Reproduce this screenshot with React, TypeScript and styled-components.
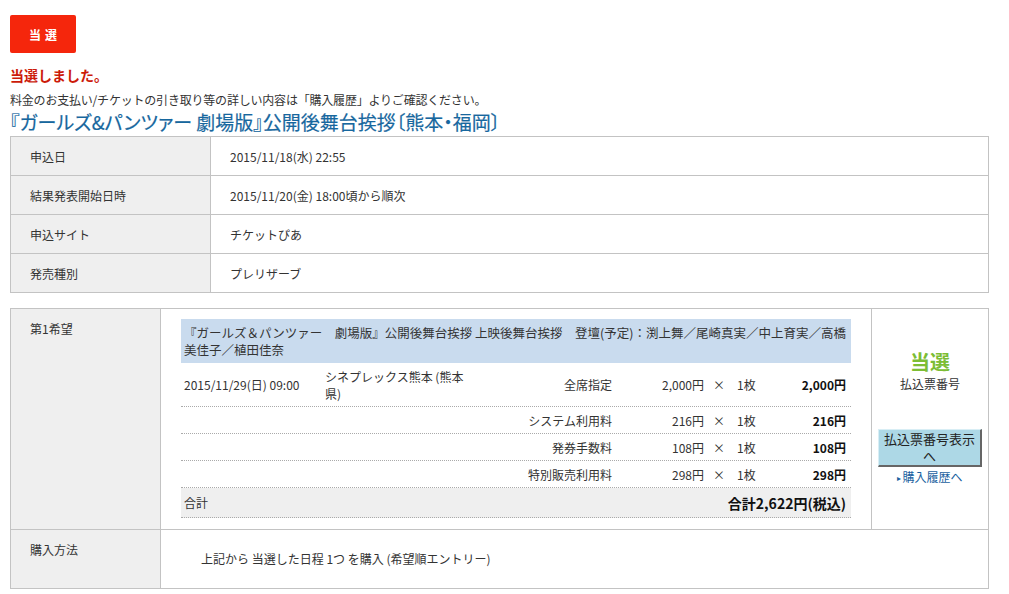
import React from 'react';
import styled, { createGlobalStyle } from 'styled-components';

const GlobalStyle = createGlobalStyle`
  body {
    margin: 0;
    background: #fff;
    font-family: "Noto Sans CJK JP", "Noto Sans", sans-serif;
    font-size: 12px;
    color: #333;
  }
`;

const Page = styled.div`
  width: 979px;
  padding: 15px 20px 10px 10px;
`;

const Badge = styled.div`
  width: 66px;
  height: 38px;
  background: #f5260c;
  border-radius: 2px;
  color: #fff;
  font-weight: bold;
  font-size: 12px;
  letter-spacing: 4px;
  display: flex;
  align-items: center;
  justify-content: center;
  padding-left: 4px;
  box-sizing: border-box;
`;

const Result = styled.div`
  margin-top: 12px;
  color: #cc1a0a;
  font-weight: bold;
  font-size: 14px;
  line-height: 20px;
`;

const Note = styled.div`
  margin-top: 6px;
  line-height: 18px;
  letter-spacing: -0.2px;
`;

const Title = styled.h1`
  margin: 2px 0 3px;
  font-size: 19px;
  line-height: 22px;
  font-weight: normal;
  color: #17679e;
  -webkit-text-stroke: 0.2px #17679e;
  font-feature-settings: "palt";
`;

const InfoTable = styled.div`
  border: 1px solid #c3c3c3;
  border-bottom: none;
`;

const InfoRow = styled.div`
  display: grid;
  grid-template-columns: 200px 1fr;
  height: 39px;
  border-bottom: 1px solid #c3c3c3;
  box-sizing: border-box;
`;

const Label = styled.div<{ $top?: boolean }>`
  background: #efefef;
  border-right: 1px solid #c3c3c3;
  padding: ${(p) => (p.$top ? '11px 19px' : '0 19px')};
  display: flex;
  align-items: ${(p) => (p.$top ? 'flex-start' : 'center')};
`;

const Value = styled.div`
  padding: 0 19px;
  display: flex;
  align-items: center;
`;

const EntryTable = styled.div`
  margin-top: 15px;
  border: 1px solid #c3c3c3;
  border-bottom: none;
`;

const EntryRow = styled.div<{ $cols: string }>`
  display: grid;
  grid-template-columns: ${(p) => p.$cols};
  border-bottom: 1px solid #c3c3c3;
`;

const Detail = styled.div`
  border-right: 1px solid #c3c3c3;
  padding: 10px 20px 11px 20px;
`;

const Method = styled.div`
  display: flex;
  align-items: center;
  padding: 0 0 2px 40px;
  height: 58px;
  box-sizing: border-box;
`;

const Header = styled.div`
  background: #c9dbee;
  padding: 5px 3px;
  height: 44px;
  box-sizing: border-box;
  font-size: 12.5px;
  line-height: 17px;
  color: #333;
`;

const PriceRow = styled.div<{ $h: number }>`
  display: grid;
  grid-template-columns: 143px 152px 136px 92px 30px 40px 1fr;
  height: ${(p) => p.$h}px;
  border-bottom: 1px dotted #aaa;
  box-sizing: border-box;
  align-items: center;
`;

const Cell = styled.div<{ $align?: 'left' | 'right' | 'center'; $bold?: boolean }>`
  text-align: ${(p) => p.$align || 'left'};
  font-weight: ${(p) => (p.$bold ? 'bold' : 'normal')};
  line-height: 17px;
  color: ${(p) => (p.$bold ? '#111' : '#333')};
`;

const TotalRow = styled.div`
  display: flex;
  justify-content: space-between;
  align-items: center;
  height: 30px;
  background: #efefef;
  border-bottom: 1px dotted #aaa;
  padding: 0 5px 0 3px;
  box-sizing: border-box;
`;

const GrandTotal = styled.span`
  font-weight: bold;
  font-size: 14px;
  color: #111;
`;

const Status = styled.div`
  display: flex;
  flex-direction: column;
  align-items: center;
  justify-content: center;
  padding-bottom: 2px;
`;

const Won = styled.div`
  color: #7cbd34;
  font-weight: bold;
  font-size: 20px;
  line-height: 26px;
  margin-top: -2px;
`;

const Caption = styled.div`
  line-height: 17px;
  margin-bottom: 37px;
`;

const ShowButton = styled.button`
  width: 104px;
  height: 38px;
  background: #add8e6;
  border-style: solid;
  border-width: 1px 2px 2px 1px;
  border-color: #d8eef5 #666 #666 #d8eef5;
  font-family: inherit;
  font-size: 13px;
  line-height: 17px;
  color: #222;
  padding: 0;
`;

const HistoryLink = styled.a`
  color: #1a5fa0;
  text-decoration: none;
  line-height: 17px;
  margin-top: 1px;
  &::before {
    content: '▸';
    font-size: 8px;
    margin-right: 1px;
    vertical-align: 1px;
  }
`;

const info: [string, string][] = [
  ['申込日', '2015/11/18(水) 22:55'],
  ['結果発表開始日時', '2015/11/20(金) 18:00頃から順次'],
  ['申込サイト', 'チケットぴあ'],
  ['発売種別', 'プレリザーブ'],
];

const fees: [string, string, string][] = [
  ['システム利用料', '216円', '216円'],
  ['発券手数料', '108円', '108円'],
  ['特別販売利用料', '298円', '298円'],
];

export default function App() {
  return (
    <>
      <GlobalStyle />
      <Page>
        <Badge>当選</Badge>
        <Result>当選しました。</Result>
        <Note>料金のお支払い/チケットの引き取り等の詳しい内容は「購入履歴」よりご確認ください。</Note>
        <Title>『ガールズ&パンツァー 劇場版』公開後舞台挨拶〔熊本・福岡〕</Title>

        <InfoTable>
          {info.map(([k, v]) => (
            <InfoRow key={k}>
              <Label>{k}</Label>
              <Value>{v}</Value>
            </InfoRow>
          ))}
        </InfoTable>

        <EntryTable>
          <EntryRow $cols="150px 1fr 116px">
            <Label $top>第1希望</Label>
            <Detail>
              <Header>
                『ガールズ＆パンツァー　劇場版』公開後舞台挨拶 上映後舞台挨拶　登壇(予定)：渕上舞／尾崎真実／中上育実／高橋美佳子／植田佳奈
              </Header>
              <PriceRow $h={44}>
                <Cell style={{ paddingLeft: 3 }}>2015/11/29(日) 09:00</Cell>
                <Cell style={{ paddingLeft: 1, paddingRight: 5 }}>シネプレックス熊本 (熊本県)</Cell>
                <Cell $align="right">全席指定</Cell>
                <Cell $align="right">2,000円</Cell>
                <Cell $align="center">×</Cell>
                <Cell style={{ paddingLeft: 3 }}>1枚</Cell>
                <Cell $align="right" $bold style={{ paddingRight: 5 }}>2,000円</Cell>
              </PriceRow>
              {fees.map(([name, unit, sum]) => (
                <PriceRow $h={27} key={name}>
                  <Cell />
                  <Cell />
                  <Cell $align="right">{name}</Cell>
                  <Cell $align="right">{unit}</Cell>
                  <Cell $align="center">×</Cell>
                  <Cell style={{ paddingLeft: 3 }}>1枚</Cell>
                  <Cell $align="right" $bold style={{ paddingRight: 5 }}>{sum}</Cell>
                </PriceRow>
              ))}
              <TotalRow>
                <span>合計</span>
                <GrandTotal>合計2,622円(税込)</GrandTotal>
              </TotalRow>
            </Detail>
            <Status>
              <Won>当選</Won>
              <Caption>払込票番号</Caption>
              <ShowButton>払込票番号表示<br />へ</ShowButton>
              <HistoryLink href="#">購入履歴へ</HistoryLink>
            </Status>
          </EntryRow>
          <EntryRow $cols="150px 1fr">
            <Label $top>購入方法</Label>
            <Method>上記から 当選した日程 1つ を購入 (希望順エントリー)</Method>
          </EntryRow>
        </EntryTable>
      </Page>
    </>
  );
}
